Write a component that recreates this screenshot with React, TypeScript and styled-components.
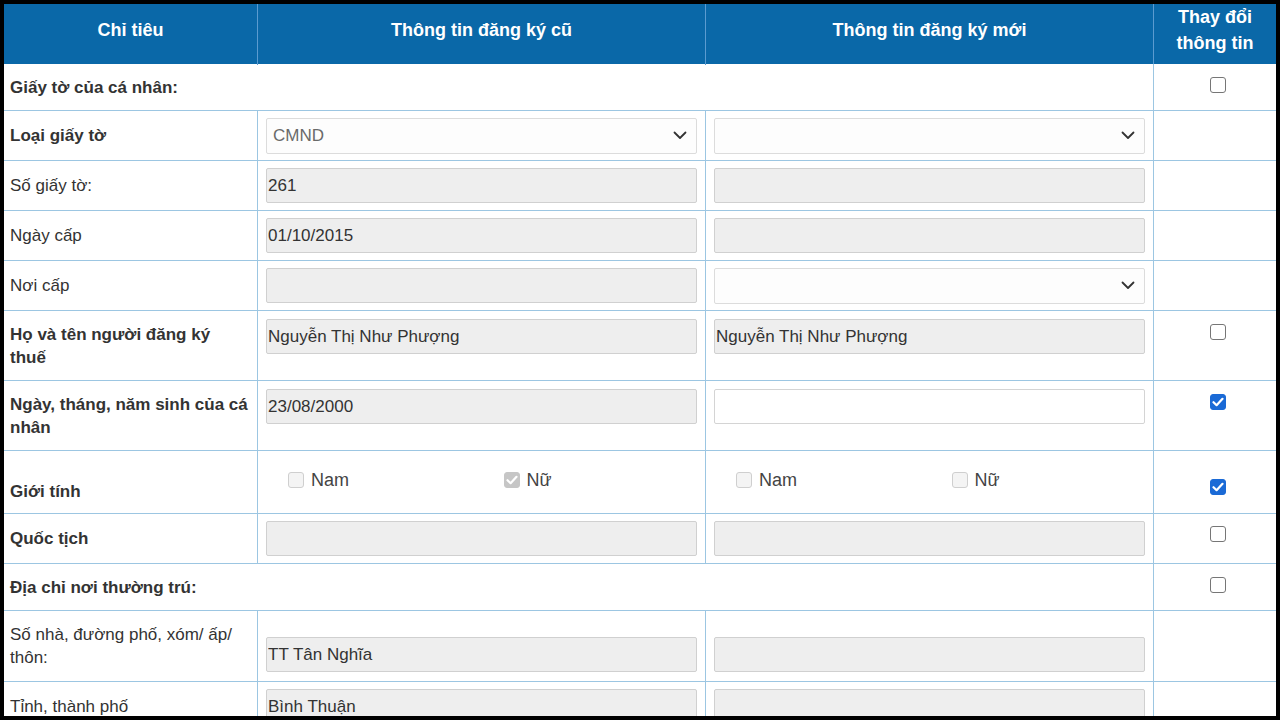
import React from "react";
import styled, {createGlobalStyle, css} from "styled-components";

const LINE = "#9cc6e2";

const GlobalStyle = createGlobalStyle`
  html, body {
    margin: 0;
    background: #000;
  }
  * {
    box-sizing: border-box;
  }
`;

type Opt = {label: string; checked?: boolean};

type Field =
  | {kind: "input"; value?: string; editable?: boolean}
  | {kind: "select"; value?: string; muted?: boolean}
  | {kind: "options"; items: Opt[]};

type Row = {
  label: string;
  bold?: boolean;
  h: number;
  labelPad?: number;
  span?: boolean;
  oldField?: Field;
  newField?: Field;
  fieldTop?: number;
  check?: boolean | null;
  checkTop?: number;
};

const rows: Row[] = [
  {label: "Giấy tờ của cá nhân:", bold: true, h: 47, span: true, check: false},
  {
    label: "Loại giấy tờ",
    bold: true,
    h: 50,
    oldField: {kind: "select", value: "CMND", muted: true},
    newField: {kind: "select"},
    check: null,
  },
  {label: "Số giấy tờ:", h: 50, oldField: {kind: "input", value: "261"}, newField: {kind: "input"}, check: null},
  {label: "Ngày cấp", h: 50, oldField: {kind: "input", value: "01/10/2015"}, newField: {kind: "input"}, check: null},
  {label: "Nơi cấp", h: 50, oldField: {kind: "input"}, newField: {kind: "select"}, check: null},
  {
    label: "Họ và tên người đăng ký thuế",
    bold: true,
    h: 70,
    fieldTop: 8,
    oldField: {kind: "input", value: "Nguyễn Thị Như Phượng"},
    newField: {kind: "input", value: "Nguyễn Thị Như Phượng"},
    check: false,
  },
  {
    label: "Ngày, tháng, năm sinh của cá nhân",
    bold: true,
    h: 70,
    fieldTop: 8,
    oldField: {kind: "input", value: "23/08/2000"},
    newField: {kind: "input", editable: true},
    check: true,
  },
  {
    label: "Giới tính",
    bold: true,
    h: 63,
    labelPad: 19,
    oldField: {kind: "options", items: [{label: "Nam"}, {label: "Nữ", checked: true}]},
    newField: {kind: "options", items: [{label: "Nam"}, {label: "Nữ"}]},
    check: true,
    checkTop: 28,
  },
  {label: "Quốc tịch", bold: true, h: 50, oldField: {kind: "input"}, newField: {kind: "input"}, check: false, checkTop: 12},
  {label: "Địa chỉ nơi thường trú:", bold: true, h: 47, span: true, check: false},
  {
    label: "Số nhà, đường phố, xóm/ ấp/ thôn:",
    h: 71,
    fieldTop: 26,
    oldField: {kind: "input", value: "TT Tân Nghĩa"},
    newField: {kind: "input"},
    check: null,
  },
  {label: "Tỉnh, thành phố", h: 50, oldField: {kind: "input", value: "Bình Thuận"}, newField: {kind: "input"}, check: null},
];

function Chevron() {
  return (
    <svg width="14" height="9" viewBox="0 0 14 9" fill="none">
      <path d="M1.5 1.5 L7 7 L12.5 1.5" stroke="#333" strokeWidth="1.8" strokeLinecap="round" strokeLinejoin="round" />
    </svg>
  );
}

function Tick() {
  return (
    <svg width="12" height="10" viewBox="0 0 12 10" fill="none">
      <path d="M1.5 5.2 L4.6 8.2 L10.5 1.8" stroke="#fff" strokeWidth="2.2" strokeLinecap="round" strokeLinejoin="round" />
    </svg>
  );
}

function FieldView({field}: {field?: Field}) {
  if (!field) return null;
  if (field.kind === "select") {
    return (
      <SelectBox>
        <SelectText $muted={field.muted}>{field.value}</SelectText>
        <Chevron />
      </SelectBox>
    );
  }
  if (field.kind === "options") {
    return (
      <OptionGroup>
        {field.items.map((o) => (
          <Option key={o.label}>
            <FakeBox $variant={o.checked ? "dimChecked" : "dim"}>{o.checked && <Tick />}</FakeBox>
            {o.label}
          </Option>
        ))}
      </OptionGroup>
    );
  }
  return <TextInput $editable={field.editable} defaultValue={field.value ?? ""} readOnly />;
}

export default function App() {
  return (
    <>
      <GlobalStyle />
      <Frame>
        <Sheet>
          <HeadRow>
            <HeadCell>Chỉ tiêu</HeadCell>
            <HeadCell>Thông tin đăng ký cũ</HeadCell>
            <HeadCell>Thông tin đăng ký mới</HeadCell>
            <HeadCell $last>Thay đổi thông tin</HeadCell>
          </HeadRow>
          {rows.map((r) => (
            <BodyRow key={r.label} $h={r.h}>
              <LabelCell $bold={r.bold} $span={r.span} $pad={r.labelPad}>
                {r.label}
              </LabelCell>
              {!r.span && (
                <>
                  <FieldCell $top={r.fieldTop} $options={r.oldField?.kind === "options"}>
                    <FieldView field={r.oldField} />
                  </FieldCell>
                  <FieldCell $top={r.fieldTop} $options={r.newField?.kind === "options"}>
                    <FieldView field={r.newField} />
                  </FieldCell>
                </>
              )}
              <CheckCell $top={r.checkTop ?? 13}>
                {r.check !== null && r.check !== undefined && (
                  <FakeBox $variant={r.check ? "checked" : "plain"}>{r.check && <Tick />}</FakeBox>
                )}
              </CheckCell>
            </BodyRow>
          ))}
        </Sheet>
      </Frame>
    </>
  );
}

const Frame = styled.div`
  height: 720px;
  padding: 4px;
  background: #000;
`;

const Sheet = styled.div`
  height: 712px;
  overflow: hidden;
  background: #fff;
  font-family: "Liberation Sans", Arial, sans-serif;
  font-size: 17px;
  color: #333;
`;

const rowGrid = css`
  display: grid;
  grid-template-columns: 254px 448px 448px 1fr;
`;

const HeadRow = styled.div`
  ${rowGrid};
  height: 60px;
  background: #0a68a8;
  border-bottom: 1px solid #0a68a8;
`;

const HeadCell = styled.div<{$last?: boolean}>`
  display: flex;
  align-items: center;
  justify-content: center;
  padding: 0 8px 9px;
  text-align: center;
  color: #fff;
  font-weight: bold;
  font-size: 18px;
  line-height: 26px;
  border-right: ${(p) => (p.$last ? "none" : "1px solid #5b9bd0")};
`;

const BodyRow = styled.div<{$h: number}>`
  ${rowGrid};
  height: ${(p) => p.$h}px;
  border-bottom: 1px solid ${LINE};
`;

const LabelCell = styled.div<{$bold?: boolean; $span?: boolean; $pad?: number}>`
  display: flex;
  align-items: center;
  padding: ${(p) => p.$pad ?? 0}px 7px 0 6px;
  line-height: 23px;
  font-weight: ${(p) => (p.$bold ? "bold" : "normal")};
  border-right: 1px solid ${LINE};
  grid-column: ${(p) => (p.$span ? "1 / span 3" : "auto")};
`;

const FieldCell = styled.div<{$top?: number; $options?: boolean}>`
  display: flex;
  align-items: ${(p) => (p.$top !== undefined ? "flex-start" : "center")};
  padding: ${(p) => (p.$top !== undefined ? p.$top : 0)}px 8px ${(p) => (p.$options ? 4 : 0)}px;
  border-right: 1px solid ${LINE};
`;

const CheckCell = styled.div<{$top: number}>`
  display: flex;
  justify-content: center;
  align-items: flex-start;
  padding: ${(p) => p.$top}px 0 0 6px;
`;

const TextInput = styled.input<{$editable?: boolean}>`
  width: 100%;
  height: 35px;
  margin: 0;
  padding: 0 1px;
  border: 1px solid ${(p) => (p.$editable ? "#d4d4d4" : "#d0d0d0")};
  border-radius: 2px;
  background: ${(p) => (p.$editable ? "#fff" : "#eeeeee")};
  font-family: inherit;
  font-size: 17px;
  color: #333;
  outline: none;
`;

const SelectBox = styled.div`
  width: 100%;
  height: 36px;
  display: flex;
  align-items: center;
  justify-content: space-between;
  padding: 0 9px 0 6px;
  border: 1px solid #dcdcdc;
  border-radius: 2px;
  background: #fdfdfd;
`;

const SelectText = styled.span<{$muted?: boolean}>`
  color: ${(p) => (p.$muted ? "#6a6a6a" : "#333")};
`;

const OptionGroup = styled.div`
  width: 100%;
  display: grid;
  grid-template-columns: 1fr 1fr;
`;

const Option = styled.label`
  display: flex;
  align-items: center;
  gap: 7px;
  padding-left: 22px;
  font-size: 18px;
  color: #444;
`;

const boxVariants = {
  plain: css`
    background: #fff;
    border: 1.5px solid #767676;
  `,
  checked: css`
    background: #1a6ad6;
    border: 1.5px solid #1a6ad6;
  `,
  dim: css`
    background: #f4f4f4;
    border: 1px solid #cfcfcf;
  `,
  dimChecked: css`
    background: #c6c6c6;
    border: 1px solid #c6c6c6;
  `,
};

const FakeBox = styled.span<{$variant: keyof typeof boxVariants}>`
  width: 16px;
  height: 16px;
  flex: none;
  display: inline-flex;
  align-items: center;
  justify-content: center;
  border-radius: 3px;
  ${(p) => boxVariants[p.$variant]};
`;
